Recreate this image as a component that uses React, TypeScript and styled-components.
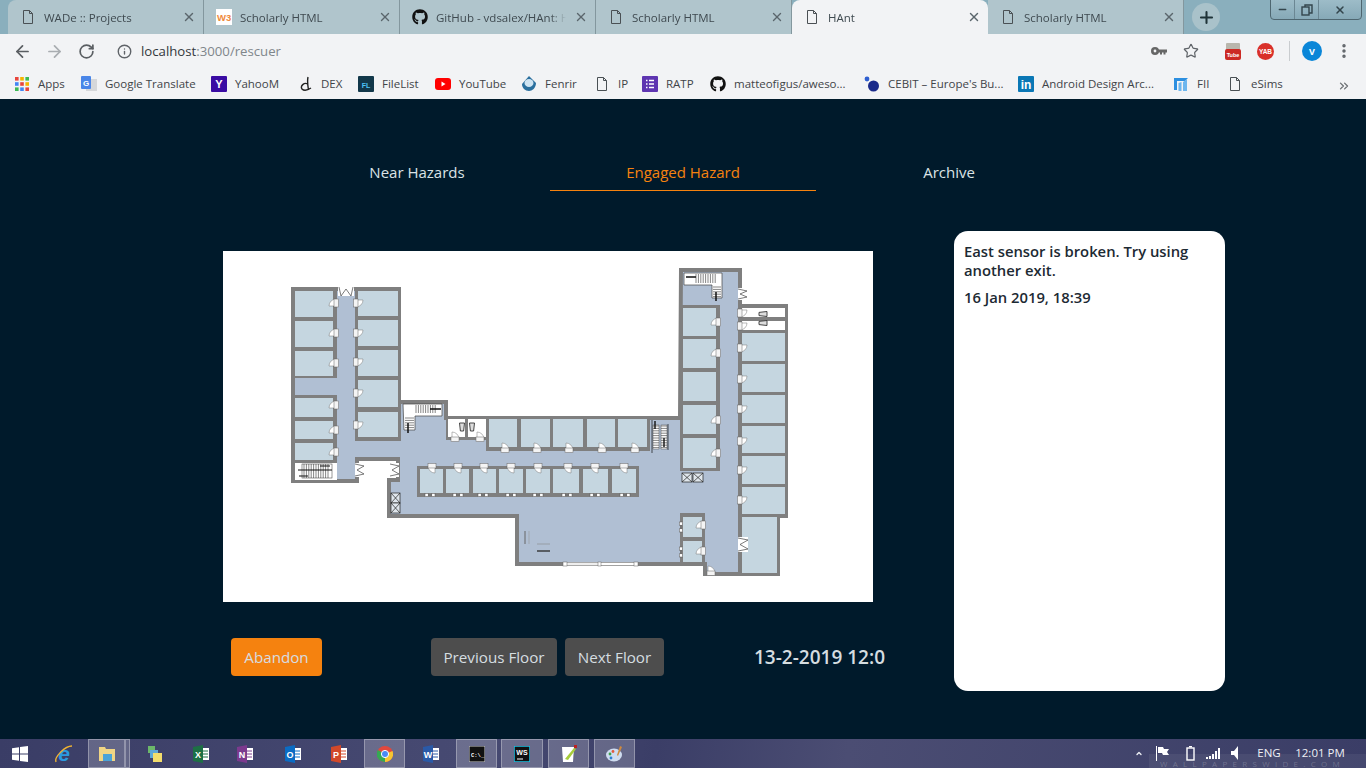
import React from "react";
import styled, { createGlobalStyle } from "styled-components";
import { ArrowLeft, ArrowRight, RotateCw, Info, Star, MoreVertical, Plus, X, Minus, ChevronsRight, ChevronUp } from "lucide-react";
import { FaGithub } from "react-icons/fa";

const Global = createGlobalStyle`
  html, body { margin: 0; padding: 0; height: 100%; background: #001a2b; overflow: hidden; }
  * { box-sizing: border-box; }
  body { font-family: "Open Sans", "Liberation Sans", sans-serif; }
`;

const Screen = styled.div`
  width: 1366px; height: 768px; display: flex; flex-direction: column; overflow: hidden;
`;
const TabStrip = styled.div`
  height: 34px; flex: none; background: #8aafbd; display: flex; padding-left: 8px; position: relative;
`;
const Tab = styled.div<{ $active?: boolean }>`
  width: 196px; height: 34px; display: flex; align-items: center; padding: 0 7px 0 12px; gap: 8px;
  background: ${p => (p.$active ? "#f2f3f5" : "#b0c5cc")};
  border-radius: ${p => (p.$active ? "8px 8px 0 0" : "0")};
  border-right: ${p => (p.$active ? "none" : "1px solid #83979e")};
  color: #3f4a50; font-size: 11.5px;
  &:first-child { border-radius: 8px 0 0 0; }
  &:last-of-type { border-radius: 0 8px 8px 0; border-right: none; }
`;
const TabTitle = styled.span`
  flex: 1; white-space: nowrap; overflow: hidden;
  mask-image: linear-gradient(to right, #000 88%, transparent);
`;
const NewTab = styled.div`
  width: 28px; height: 28px; border-radius: 50%; background: #a9c2ca; margin: 3px 0 0 8px;
  display: flex; align-items: center; justify-content: center; color: #1f3338;
`;
const WinControls = styled.div`
  position: absolute; right: 4px; top: -1px; width: 92px; height: 21px; display: flex;
  border: 1px solid #4e6670; border-radius: 0 0 4px 4px; color: #33454c;
  background: linear-gradient(#9dbcc8, #86a9b7);
`;
const WinButton = styled.div<{ $w: number }>`
  width: ${p => p.$w}px; display: flex; align-items: center; justify-content: center;
  border-right: 1px solid #6b8793;
  &:last-child { border-right: none; }
`;
const Toolbar = styled.div`
  height: 34px; flex: none; background: #f2f3f5; display: flex; align-items: center; padding-left: 6px; color: #5f6368;
`;
const NavIcon = styled.div<{ $dim?: boolean }>`
  width: 32px; display: flex; justify-content: center; color: ${p => (p.$dim ? "#a9adb1" : "#5a5e62")};
`;
const Url = styled.div`
  display: flex; align-items: center; margin-left: 15px; gap: 9px; font-size: 13.2px; flex: 1; color: #80868b;
  b { font-weight: 400; color: #33383c; }
`;
const ToolRight = styled.div`
  display: flex; align-items: center; color: #5f6368; padding-right: 5px;
`;
const ToolSlot = styled.div<{ $w: number; $ml?: number }>`
  width: ${p => p.$w}px; margin-left: ${p => p.$ml ?? 0}px; display: flex; justify-content: center; align-items: center;
`;
const ToolSep = styled.div`
  width: 1px; height: 20px; background: #c9cccf;
`;
const Avatar = styled.div`
  width: 20px; height: 20px; border-radius: 50%; background: #0a86d8; color: #fff; font-size: 9px; font-weight: 700;
  display: flex; align-items: center; justify-content: center;
`;
const Bookmarks = styled.div`
  height: 31px; flex: none; background: #f2f3f5; display: flex; align-items: center; padding-left: 14px; position: relative;
`;
const Bookmark = styled.div<{ $w: number }>`
  width: ${p => p.$w}px; flex: none; display: flex; align-items: center; gap: 8px; font-size: 11.5px; color: #3f4448; white-space: nowrap;
`;
const BmIcon = styled.span`
  width: 16px; height: 16px; flex: none; display: flex; align-items: center; justify-content: center;
`;
const MoreBm = styled.div`
  position: absolute; right: 15px; top: 8px; color: #6b6f73;
`;
const Page = styled.main`
  flex: 1; background: #001a2b; display: flex; flex-direction: column; padding-top: 58px; color: #d3dbdf;
`;
const NavTabs = styled.nav`
  display: flex; margin-left: 284px; width: 798px; height: 34px;
`;
const NavTab = styled.div<{ $active?: boolean }>`
  flex: 1; text-align: center; font-size: 15px; line-height: 30px; height: 34px;
  color: ${p => (p.$active ? "#f5820f" : "#dbe3e6")};
  box-shadow: ${p => (p.$active ? "inset 0 -1px 0 #f5820f" : "none")};
`;
const Body = styled.div`
  display: flex; margin: 40px 0 0 223px; gap: 81px;
`;
const LeftCol = styled.div`
  width: 650px; padding-top: 20px;
`;
const MapBox = styled.div`
  width: 650px; height: 351px; background: #fff;
  svg { display: block; }
`;
const Controls = styled.div`
  display: flex; align-items: center; margin: 36px 0 0 8px; white-space: nowrap;
`;
const Btn = styled.button<{ $orange?: boolean; $w: number; $ml?: number }>`
  flex: none; width: ${p => p.$w}px; height: 38px; border: 0; border-radius: 4px; margin-left: ${p => p.$ml ?? 0}px;
  background: ${p => (p.$orange ? "#f5820f" : "#4d4d4d")}; color: #d5dde0; font: 400 15.2px "Open Sans", sans-serif; padding: 0;
`;
const DateText = styled.div`
  flex: none; margin-left: 90px; font-size: 19px; font-weight: 600; color: #d5dde0;
`;
const Side = styled.aside`
  width: 271px; height: 460px; background: #fff; border-radius: 14px; padding: 11px 10px; color: #1d2a33;
  font-size: 14.8px; font-weight: 600; line-height: 19px;
`;
const SideP = styled.p`
  margin: 0 0 8px;
`;
const Taskbar = styled.footer`
  height: 29px; flex: none; position: relative; display: flex; align-items: center;
  background: linear-gradient(100deg, #3a3d66 0%, #474a72 35%, #3b3e67 48%, #4b4d73 62%, #3a3d66 100%);
`;
const TaskSlot = styled.div<{ $w: number; $on?: boolean }>`
  width: ${p => p.$w}px; height: 29px; flex: none; display: flex; align-items: center; justify-content: center;
  ${p => p.$on && "background: rgba(255,255,255,.2); box-shadow: inset 0 0 0 1px rgba(255,255,255,.3);"}
`;
const Tray = styled.div`
  position: absolute; left: 1135px; top: 0; height: 29px; display: flex; align-items: center; color: #eef0f5;
  font-size: 11.5px; line-height: 12px; padding-bottom: 1px;
`;
const TrayItem = styled.div<{ $w: number }>`
  width: ${p => p.$w}px; display: flex; justify-content: center;
`;
const Watermark = styled.div`
  position: absolute; left: 1149px; bottom: 0; width: 217px; height: 14px; background: rgba(255,255,255,.06);
  color: rgba(255,255,255,.22); font-size: 8px; letter-spacing: 5.3px; line-height: 8px; padding: 6px 0 0 11px; white-space: nowrap; overflow: hidden;
`;

const DocIcon = () => (
  <svg width="16" height="16" viewBox="0 0 16 16" fill="none" stroke="#4a5054" strokeWidth="1">
    <path d="M3.5 1.5h6l3 3v10h-9z M9.5 1.5v3h3" />
  </svg>
);
const W3Icon = () => (
  <svg width="16" height="16" viewBox="0 0 16 16">
    <rect width="16" height="16" fill="#fff" />
    <text x="1" y="12" fontSize="9.5" fontWeight="700" fill="#f08a3c" fontFamily="Liberation Sans">W3</text>
  </svg>
);
const Sq = ({ c, t, fg = "#fff", r = 1 }: { c: string; t: string; fg?: string; r?: number }) => (
  <svg width="16" height="16" viewBox="0 0 16 16">
    <rect width="16" height="16" rx={r} fill={c} />
    <text x="8" y="12" fontSize={t.length > 1 ? 7 : 11} fontWeight="700" textAnchor="middle" fill={fg} fontFamily="Liberation Sans">{t}</text>
  </svg>
);
const AppsIcon = () => {
  const cs = ["#e8453c", "#f4b400", "#3cba54", "#4285f4", "#e8453c", "#f4b400", "#3cba54", "#4285f4", "#e8453c"];
  return (
    <svg width="14" height="14" viewBox="0 0 14 14">
      {cs.map((c, i) => <rect key={i} x={(i % 3) * 5.2} y={Math.floor(i / 3) * 5.2} width="3.6" height="3.6" fill={c} />)}
    </svg>
  );
};
const bookmarks: { t: string; w: number; i: React.ReactNode }[] = [
  { t: "Apps", w: 67, i: <AppsIcon /> },
  { t: "Google Translate", w: 130, i: <svg width="16" height="16" viewBox="0 0 16 16"><rect x="5" y="3" width="11" height="12" fill="#d5d7da" /><rect width="10" height="13" rx="1" fill="#4a86e8" /><text x="5" y="10" fontSize="8" fontWeight="700" textAnchor="middle" fill="#fff" fontFamily="Liberation Sans">G</text></svg> },
  { t: "YahooM", w: 86, i: <Sq c="#3a0ca3" t="Y" /> },
  { t: "DEX", w: 61, i: <svg width="16" height="16" viewBox="0 0 16 16"><path d="M11 1 C10 6 11 11 11.5 14 M11 8 C7 6 3 10 5 13 C7 15 11 14 14 12" fill="none" stroke="#222" strokeWidth="1.4" /></svg> },
  { t: "FileList", w: 77, i: <Sq c="#12384a" t="FL" fg="#4fc3f7" /> },
  { t: "YouTube", w: 86, i: <svg width="16" height="16" viewBox="0 0 16 16"><rect y="2" width="16" height="12" rx="3" fill="#f00" /><path d="M6.5 5.5l4 2.5-4 2.5z" fill="#fff" /></svg> },
  { t: "Fenrir", w: 73, i: <svg width="16" height="16" viewBox="0 0 16 16"><path d="M8 0 L15 7 C15 12 11 15 8 15 C4 15 1 12 1 8z" fill="#2a6f9e" /><ellipse cx="8" cy="7" rx="4.5" ry="4" fill="#cfe4f2" /></svg> },
  { t: "IP", w: 48, i: <DocIcon /> },
  { t: "RATP", w: 68, i: <svg width="16" height="16" viewBox="0 0 16 16"><rect width="16" height="16" rx="1" fill="#5e35b1" /><path d="M4 4.5h1.5M7 4.5h5M4 8h1.5M7 8h5M4 11.5h1.5M7 11.5h5" stroke="#fff" strokeWidth="1.6" /></svg> },
  { t: "matteofigus/aweso...", w: 154, i: <FaGithub size={16} color="#111" /> },
  { t: "CEBIT – Europe's Bu...", w: 154, i: <svg width="16" height="16" viewBox="0 0 16 16"><circle cx="9.5" cy="10" r="5.5" fill="#1a2a8a" /><circle cx="3" cy="3" r="2.4" fill="#2f5fd0" /></svg> },
  { t: "Android Design Arc...", w: 155, i: <svg width="16" height="16" viewBox="0 0 16 16"><rect width="16" height="16" rx="1" fill="#0a77b5" /><text x="8" y="13" fontSize="12" fontWeight="700" textAnchor="middle" fill="#fff" fontFamily="Liberation Sans">in</text></svg> },
  { t: "FII", w: 54, i: <svg width="16" height="16" viewBox="0 0 16 16"><path d="M1 2h14l-3 3H4v9H1z" fill="#2d8fe0" /><path d="M5.5 15V7l3-1v9zM10 15V6l4-3v12z" fill="#6db6ee" /></svg> },
  { t: "eSims", w: 60, i: <DocIcon /> },
];

/* Floor plan */
const WALL = "#7f7f7f";
const ROOM = "#c5d6e0";
const HALL = "#b0bfd3";
type R = [number, number, number, number];
const wallBlocks: R[] = [
  [291, 287, 46, 91], [291, 395, 46, 68], [355, 287, 46, 154],
  [486, 416, 164, 35], [446, 416, 42, 24], [417, 466, 222, 31],
  [680, 305, 40, 166], [738, 305, 49, 211], [738, 516, 40, 59], [680, 513, 25, 52],
];
const rooms: R[] = [
  [295, 291, 38, 26], [295, 321, 38, 26], [295, 351, 38, 25],
  [295, 398, 38, 19], [295, 421, 38, 18], [295, 443, 38, 17],
  [358, 291, 40, 25], [358, 320, 40, 26], [358, 350, 40, 26], [358, 380, 40, 27], [358, 412, 40, 25],
  [489, 419, 28, 28], [521, 419, 29, 28], [553, 419, 30, 28], [587, 419, 28, 28], [618, 419, 29, 28],
  [420, 469, 23, 24], [446, 469, 23, 24], [473, 469, 23, 24], [499, 469, 24, 24], [526, 469, 24, 24],
  [553, 469, 26, 24], [583, 469, 25, 24], [612, 469, 24, 24],
  [683, 308, 33, 28], [683, 339, 33, 29], [683, 372, 33, 29], [683, 405, 33, 29], [683, 438, 33, 30],
  [742, 333, 43, 28], [742, 364, 43, 28], [742, 395, 43, 28], [742, 426, 43, 27], [742, 456, 43, 28], [742, 487, 43, 27],
  [742, 517, 35, 56], [683, 517, 19, 20], [683, 541, 19, 21],
];
const whites: R[] = [[448, 419, 17, 18], [468, 419, 18, 18], [742, 308, 43, 9], [742, 321, 43, 9], [295, 463, 42, 17]];
const outline = "293,289 399,289 399,402 446,402 446,418 680,418 681,270 740,270 740,306 786,306 786,516 778,516 778,574 705,574 705,564 517,564 517,516 389,516 389,480 398,480 398,459 357,459 357,481 293,481";

type Dir = "l" | "r" | "u" | "d";
const rot: Record<Dir, number> = { l: 0, r: 180, u: 90, d: 270 };
const Door = ({ x, y, d }: { x: number; y: number; d: Dir }) => (
  <g transform={`translate(${x} ${y}) rotate(${rot[d]})`}>
    <path d="M0 -4 A7 7 0 0 0 -7 3 L0 3z" fill="#fff" stroke="#777" strokeWidth=".5" />
    <rect x="-2" y="-4" width="4.5" height="8" fill="#f4f4f4" stroke="#666" strokeWidth=".5" />
  </g>
);
const doors: [number, number, Dir][] = [
  ...[303, 333, 363, 405, 430, 452].map(y => [336, y, "l"] as [number, number, Dir]),
  ...[303, 333, 362, 393, 425].map(y => [356, y, "r"] as [number, number, Dir]),
  ...[505, 537, 569, 602, 635].map(x => [x, 450, "u"] as [number, number, Dir]),
  [455, 439, "u"], [480, 439, "u"], [711, 573, "u"],
  ...[432, 458, 484, 511, 538, 568, 595, 624].map(x => [x, 466, "d"] as [number, number, Dir]),
  ...[322, 353, 420, 453, 525, 551].map(y => [y > 500 ? 703 : 718, y, "l"] as [number, number, Dir]),
  ...[348, 379, 409, 441, 470, 500, 313, 326].map(y => [740, y, "r"] as [number, number, Dir]),
];
const DoubleDoor = ({ x, y, w, h }: { x: number; y: number; w: number; h: number }) => (
  <g>
    <rect x={x} y={y} width={w} height={h} fill="#fff" />
    <path d={w > h
      ? `M${x + 1} ${y} L${x + 3} ${y + h} L${x + w / 2} ${y + 2} L${x + w - 3} ${y + h} L${x + w - 1} ${y}`
      : `M${x} ${y + 1} L${x + w} ${y + 3} L${x + 2} ${y + h / 2} L${x + w} ${y + h - 3} L${x} ${y + h - 1}`}
      fill="none" stroke="#444" strokeWidth=".7" />
  </g>
);
const XBox = ({ x, y, w, h }: { x: number; y: number; w: number; h: number }) => (
  <g stroke="#222" strokeWidth=".7" fill="#dfe6ec">
    <rect x={x} y={y} width={w} height={h} />
    <path d={`M${x} ${y} L${x + w} ${y + h} M${x + w} ${y} L${x} ${y + h}`} fill="none" />
  </g>
);
const Win = ({ x, y, v }: { x: number; y: number; v?: boolean }) => (
  <g fill="#fff" stroke="#555" strokeWidth=".5" transform={`translate(${x} ${y}) rotate(${v ? 90 : 0})`}>
    <rect x="-5" y="-1.6" width="3.2" height="3.2" />
    <rect x="1.8" y="-1.6" width="3.2" height="3.2" />
    <path d="M-1.8 0 H1.8" />
  </g>
);
const Toilet = ({ x, y, r = 0 }: { x: number; y: number; r?: number }) => (
  <g transform={`translate(${x} ${y}) rotate(${r})`} fill="#ddd" stroke="#333" strokeWidth=".9">
    <path d="M-2.5 -4 H2.5 L1.6 4 H-1.6z" />
  </g>
);
const StairLines = ({ x0, x1, y0, y1, step, v }: { x0: number; x1: number; y0: number; y1: number; step: number; v?: boolean }) => {
  const out: React.ReactNode[] = [];
  if (v) for (let x = x0; x <= x1; x += step) out.push(<path key={x} d={`M${x} ${y0} V${y1}`} stroke="#333" strokeWidth=".6" />);
  else for (let y = y0; y <= y1; y += step) out.push(<path key={y} d={`M${x0} ${y} H${x1}`} stroke="#333" strokeWidth=".6" />);
  return <>{out}</>;
};
const FloorPlan = () => (
  <svg width="650" height="351" viewBox="223 251 650 351">
    <polygon points={outline} fill={HALL} stroke={WALL} strokeWidth="4" />
    {wallBlocks.map((r, i) => <rect key={i} x={r[0]} y={r[1]} width={r[2]} height={r[3]} fill={WALL} />)}
    {rooms.map((r, i) => <rect key={i} x={r[0]} y={r[1]} width={r[2]} height={r[3]} fill={ROOM} />)}
    {whites.map((r, i) => <rect key={i} x={r[0]} y={r[1]} width={r[2]} height={r[3]} fill="#fff" />)}
    <rect x="738" y="269" width="4" height="36" fill={WALL} />
    {doors.map(([x, y, d], i) => <Door key={i} x={x} y={y} d={d} />)}
    {[430, 458, 483, 511, 538, 567, 595, 625].map(x => <Win key={x} x={x} y={495} />)}
    <Win x={681} y={527} v /><Win x={681} y={552} v />
    <DoubleDoor x={338} y={287} w={16} h={9} />
    <DoubleDoor x={738} y={288} w={9} h={12} />
    <DoubleDoor x={738} y={537} w={10} h={15} />
    <DoubleDoor x={355} y={463} w={9} h={14} />
    <DoubleDoor x={390} y={463} w={9} h={14} />
    <XBox x={391} y={493} w={9} h={10} /><XBox x={391} y={503} w={9} h={10} />
    <XBox x={682} y={473} w={10} h={9} /><XBox x={693} y={473} w={10} h={9} />
    <Toilet x={462} y={427} /><Toilet x={472} y={427} />
    <Toilet x={763} y={314} r={90} /><Toilet x={763} y={323} r={90} />
    {/* stairs west */}
    <path d="M403 404 H442 V416 H415 V430 H404 Z" fill="#fff" stroke="#444" strokeWidth=".7" />
    <StairLines x0={416} x1={436} y0={405} y1={413} step={2.4} v />
    <StairLines x0={405} x1={414} y0={418} y1={429} step={2.4} />
    <path d="M430 409 H441 M408 423 V433" stroke="#111" strokeWidth="1.5" />
    {/* stairs north */}
    <path d="M684 273 H722 V298 H712 V285 H684 Z" fill="#fff" stroke="#444" strokeWidth=".7" />
    <StairLines x0={696} x1={716} y0={274} y1={283} step={2.4} v />
    <StairLines x0={713} x1={721} y0={287} y1={297} step={2.4} />
    <path d="M686 277 H696 M716 292 V301" stroke="#111" strokeWidth="1.5" />
    {/* escalator west */}
    <rect x="302" y="464" width="30" height="14" fill="#fff" stroke="#333" strokeWidth=".5" />
    <StairLines x0={304} x1={330} y0={464} y1={478} step={2.4} v />
    <path d="M298 470 H332 M320 466 H330 M299 476 H308" stroke="#111" strokeWidth="1.1" />
    {/* escalator center */}
    <rect x="653" y="425" width="6" height="24" fill="#fff" stroke="#333" strokeWidth=".4" />
    <rect x="661" y="425" width="6" height="24" fill="#fff" stroke="#333" strokeWidth=".4" />
    <StairLines x0={653} x1={659} y0={426} y1={448} step={2.4} />
    <StairLines x0={661} x1={667} y0={426} y1={448} step={2.4} />
    <path d="M652 420 V453 M668 424 V450" stroke="#111" strokeWidth=".7" />
    <path d="M655 421 V429 M664 438 V447" stroke="#111" strokeWidth="1.4" />
    {/* lobby desk + window */}
    <path d="M525 531 V544" stroke="#666" strokeWidth="1" /><path d="M529 531 V544" stroke="#999" strokeWidth=".6" />
    <path d="M537 544 H550" stroke="#888" strokeWidth=".6" /><path d="M537 551 H550" stroke="#333" strokeWidth="1.4" />
    <rect x="566" y="562.5" width="33" height="3" fill="#eee" stroke="#999" strokeWidth=".4" />
    <rect x="600" y="562.5" width="35" height="3" fill="#fff" stroke="#777" strokeWidth=".4" />
    <rect x="563" y="562" width="4" height="4" fill="#fff" stroke="#666" strokeWidth=".5" />
    <rect x="598" y="562" width="3" height="4" fill="#fff" stroke="#666" strokeWidth=".5" />
    <rect x="634" y="562" width="4" height="4" fill="#fff" stroke="#666" strokeWidth=".5" />
  </svg>
);

const tabs: { t: string; i: React.ReactNode; a?: boolean }[] = [
  { t: "WADe :: Projects", i: <DocIcon /> },
  { t: "Scholarly HTML", i: <W3Icon /> },
  { t: "GitHub - vdsalex/HAnt: H", i: <FaGithub size={16} color="#111" /> },
  { t: "Scholarly HTML", i: <DocIcon /> },
  { t: "HAnt", i: <DocIcon />, a: true },
  { t: "Scholarly HTML", i: <DocIcon /> },
];

const OfficeIcon = ({ c, t }: { c: string; t: string }) => (
  <svg width="16" height="18" viewBox="0 0 16 18">
    <rect x="7" y="3" width="9" height="12" fill="#fff" />
    <path d="M9 6h6M9 9h6M9 12h6" stroke={c} strokeWidth="1" />
    <path d="M0 2 L10 0 V18 L0 16z" fill={c} />
    <text x="5" y="12.5" fontSize="9" fontWeight="700" textAnchor="middle" fill="#fff" fontFamily="Liberation Sans">{t}</text>
  </svg>
);
const taskItems: { w: number; on?: boolean; i?: React.ReactNode }[] = [
  { w: 40, i: <svg width="16" height="16" viewBox="0 0 16 16" fill="#fff"><path d="M0 2.2 L7 1.2 V7.5 H0z M8 1 L16 0 V7.5 H8z M0 8.5 H7 V14.8 L0 13.8z M8 8.5 H16 V16 L8 15z" /></svg> },
  { w: 48, i: <svg width="22" height="22" viewBox="0 0 22 22"><text x="11" y="18" fontSize="21" fontStyle="italic" fontWeight="700" textAnchor="middle" fill="#2b9ae0" fontFamily="Liberation Sans">e</text><path d="M3 19 C1 14 12 3 19 3" fill="none" stroke="#f2b530" strokeWidth="1.4" /></svg> },
  { w: 37, on: true, i: <svg width="18" height="16" viewBox="0 0 18 16"><path d="M1 1h6l1 2h9v12H1z" fill="#f0d584" /><rect x="5" y="8" width="9" height="7" fill="#4aa3d8" /></svg> },
  { w: 5, on: true },
  { w: 50, i: <svg width="16" height="18" viewBox="0 0 16 18"><path d="M1 1h7v7H1z" fill="#6cb86a" /><path d="M3 5h8v8H3z" fill="#5fa8d8" /><path d="M6 8h9v9H6z" fill="#f3dd6c" /></svg> },
  { w: 42, i: <OfficeIcon c="#1d7044" t="X" /> },
  { w: 46, i: <OfficeIcon c="#7c3a8e" t="N" /> },
  { w: 50, i: <OfficeIcon c="#0b6cc4" t="O" /> },
  { w: 42, i: <OfficeIcon c="#d2492a" t="P" /> },
  { w: 4 },
  { w: 41, on: true, i: <svg width="16" height="16" viewBox="0 0 16 16"><circle cx="8" cy="8" r="8" fill="#e2483d" /><path d="M8 8 L15.5 5 A8 8 0 0 1 8 16z" fill="#f7c531" /><path d="M8 8 L8 16 A8 8 0 0 1 .8 4z" fill="#35a853" /><circle cx="8" cy="8" r="3.6" fill="#4a8af4" stroke="#fff" /></svg> },
  { w: 51, i: <OfficeIcon c="#2a5aa8" t="W" /> },
  { w: 41, on: true, i: <svg width="16" height="16" viewBox="0 0 16 16"><rect width="16" height="16" fill="#111" stroke="#ccc" /><text x="2" y="10.5" fontSize="5.5" fontWeight="700" fill="#fff" fontFamily="Liberation Mono">C:\_</text></svg> },
  { w: 4 },
  { w: 42, on: true, i: <svg width="16" height="16" viewBox="0 0 16 16"><rect width="16" height="16" fill="#111" stroke="#19c3e6" strokeWidth="1.5" /><text x="8" y="9" fontSize="7" fontWeight="700" textAnchor="middle" fill="#fff" fontFamily="Liberation Sans">WS</text><path d="M3 13h6" stroke="#fff" /></svg> },
  { w: 5 },
  { w: 41, on: true, i: <svg width="16" height="18" viewBox="0 0 16 18"><path d="M1 2h12l-1 15H2z" fill="#fff" /><path d="M4 14 L13 3 L15 4 L7 15z" fill="#a7cc3b" /><rect x="13" y="0" width="3" height="3" fill="#b22" /></svg> },
  { w: 5 },
  { w: 41, on: true, i: <svg width="18" height="16" viewBox="0 0 18 16"><ellipse cx="8" cy="9" rx="8" ry="6.5" fill="#cfdcf0" /><circle cx="4" cy="8" r="1.4" fill="#3fa14b" /><circle cx="7" cy="5.5" r="1.4" fill="#e25a3b" /><circle cx="5" cy="12" r="1.4" fill="#2d7fd4" /><path d="M14 0 L16 1 L12 10 L11 9z" fill="#d08a3c" /></svg> },
];

export default function App() {
  return (
    <Screen>
      <Global />
      <TabStrip>
        {tabs.map((t, i) => (
          <Tab key={i} $active={t.a}>
            {t.i}
            <TabTitle>{t.t}</TabTitle>
            <X size={14} strokeWidth={2.4} color="#5a666c" />
          </Tab>
        ))}
        <NewTab><Plus size={19} strokeWidth={2.6} /></NewTab>
        <WinControls>
          <WinButton $w={24}><Minus size={11} strokeWidth={3} /></WinButton>
          <WinButton $w={24}><svg width="12" height="12" viewBox="0 0 12 12" fill="none" stroke="currentColor" strokeWidth="1.4"><rect x="1" y="3" width="7" height="8" /><path d="M4 3V1h7v8H8" /></svg></WinButton>
          <WinButton $w={42}><X size={12} strokeWidth={3} /></WinButton>
        </WinControls>
      </TabStrip>
      <Toolbar>
        <NavIcon><ArrowLeft size={19} strokeWidth={2.2} /></NavIcon>
        <NavIcon $dim><ArrowRight size={19} strokeWidth={2.2} /></NavIcon>
        <NavIcon><RotateCw size={17} strokeWidth={2.4} /></NavIcon>
        <Url><Info size={15} strokeWidth={2.2} color="#5f6368" /><span><b>localhost</b>:3000/rescuer</span></Url>
        <ToolRight>
          <ToolSlot $w={32}><svg width="16" height="10" viewBox="0 0 16 10" fill="#666"><circle cx="4" cy="5" r="4" /><circle cx="4" cy="5" r="1.4" fill="#f2f3f5" /><path d="M7 3.5h9v3h-1.5v2h-2v-2H11v2H9v-2H7z" /></svg></ToolSlot>
          <ToolSlot $w={32}><Star size={16} strokeWidth={1.8} /></ToolSlot>
          <ToolSlot $w={32} $ml={10}><svg width="16" height="17" viewBox="0 0 16 17"><rect x="1" y="0" width="14" height="8" rx="1" fill="#b9b6ad" /><rect x="0" y="6" width="16" height="11" rx="2" fill="#cc2a24" /><text x="8" y="14" fontSize="5.5" fontWeight="700" textAnchor="middle" fill="#fff" fontFamily="Liberation Sans">Tube</text></svg></ToolSlot>
          <ToolSlot $w={32}><svg width="17" height="17" viewBox="0 0 17 17"><circle cx="8.5" cy="8.5" r="8.5" fill="#d9302a" /><text x="8.5" y="11" fontSize="6.5" fontWeight="700" textAnchor="middle" fill="#fff" fontFamily="Liberation Sans">YAB</text></svg></ToolSlot>
          <ToolSlot $w={16}><ToolSep /></ToolSlot>
          <ToolSlot $w={30}><Avatar>V</Avatar></ToolSlot>
          <ToolSlot $w={34}><MoreVertical size={18} strokeWidth={2.6} /></ToolSlot>
        </ToolRight>
      </Toolbar>
      <Bookmarks>
        {bookmarks.map(b => (
          <Bookmark key={b.t} $w={b.w}>
            <BmIcon>{b.i}</BmIcon>
            {b.t}
          </Bookmark>
        ))}
        <MoreBm><ChevronsRight size={14} strokeWidth={2.2} /></MoreBm>
      </Bookmarks>
      <Page>
        <NavTabs>
          <NavTab>Near Hazards</NavTab>
          <NavTab $active>Engaged Hazard</NavTab>
          <NavTab>Archive</NavTab>
        </NavTabs>
        <Body>
          <LeftCol>
            <MapBox><FloorPlan /></MapBox>
            <Controls>
              <Btn $orange $w={91}>Abandon</Btn>
              <Btn $w={126} $ml={109}>Previous Floor</Btn>
              <Btn $w={99} $ml={8}>Next Floor</Btn>
              <DateText>13-2-2019 12:0</DateText>
            </Controls>
          </LeftCol>
          <Side>
            <SideP>East sensor is broken. Try using another exit.</SideP>
            <SideP>16 Jan 2019, 18:39</SideP>
          </Side>
        </Body>
      </Page>
      <Taskbar>
        {taskItems.map((t, i) => <TaskSlot key={i} $w={t.w} $on={t.on}>{t.i}</TaskSlot>)}
        <Watermark>WALLPAPERSWIDE.COM</Watermark>
        <Tray>
          <TrayItem $w={8}><ChevronUp size={9} strokeWidth={4} /></TrayItem>
          <TrayItem $w={38}><svg width="14" height="15" viewBox="0 0 14 15" fill="#fff"><path d="M1 0h1v15H1z M3 1h5l1 2h5l-2 3 2 3H8L7 7H3z" /></svg></TrayItem>
          <TrayItem $w={18}><svg width="9" height="15" viewBox="0 0 9 15" fill="none" stroke="#fff" strokeWidth="1.4"><rect x="1" y="2" width="7" height="12" /><path d="M3 .7h3" /></svg></TrayItem>
          <TrayItem $w={28}><svg width="15" height="11" viewBox="0 0 15 11" fill="#fff"><path d="M0 9h2v2H0zM3 8h2v3H3zM6 6h2v5H6zM9 3h2v8H9zM12 0h2v11h-2z" /></svg></TrayItem>
          <TrayItem $w={16}><svg width="8" height="14" viewBox="0 0 8 14" fill="#fff"><path d="M0 5h3l4-5v14l-4-5H0z" /></svg></TrayItem>
          <TrayItem $w={52}>ENG</TrayItem>
          <TrayItem $w={50}>12:01 PM</TrayItem>
        </Tray>
      </Taskbar>
    </Screen>
  );
}
